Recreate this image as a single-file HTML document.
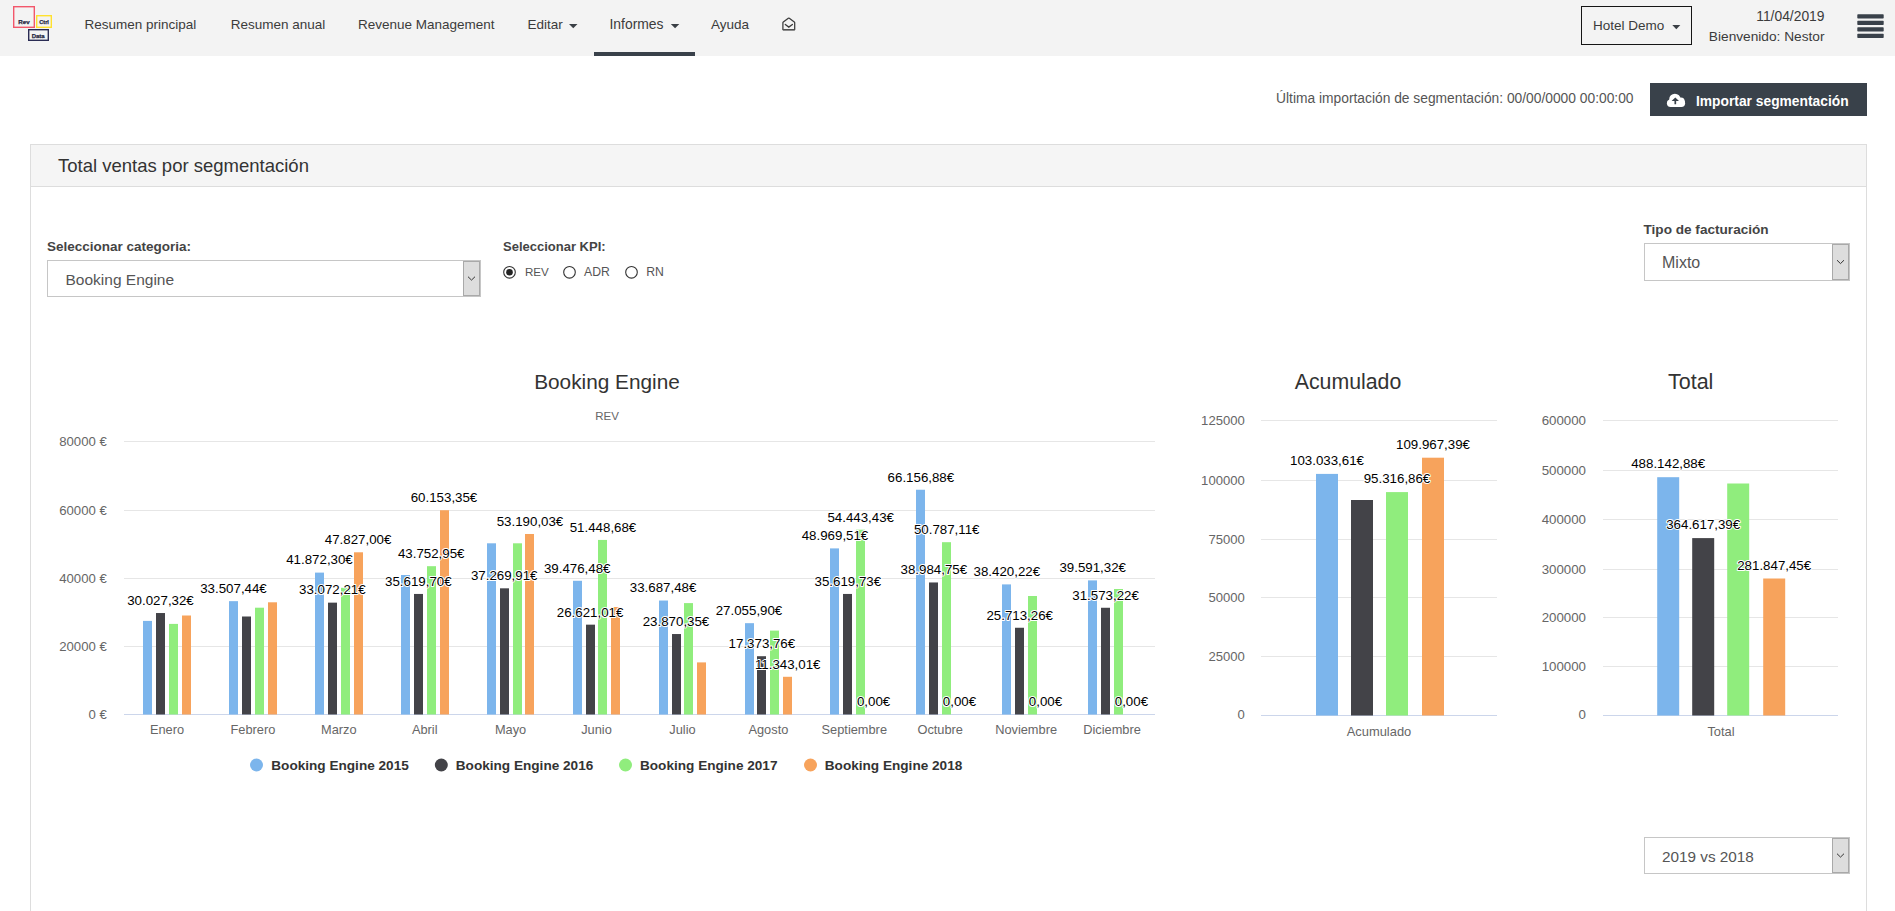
<!DOCTYPE html>
<html lang="es"><head><meta charset="utf-8"><title>Total ventas por segmentación</title>
<style>
html,body{margin:0;padding:0;background:#fff;overflow:hidden;}
body{width:1895px;height:911px;font-family:"Liberation Sans", sans-serif;}
svg{display:block;font-family:"Liberation Sans", sans-serif;}
</style></head><body>
<svg width="1895" height="911" viewBox="0 0 1895 911">
<rect x="0" y="0" width="1895" height="56" fill="#f3f3f3" stroke="none" stroke-width="1" />
<rect x="13.7" y="6.7" width="20.6" height="20.6" fill="none" stroke="#f2576b" stroke-width="1.4" />
<rect x="36.7" y="15.7" width="14.6" height="11.6" fill="none" stroke="#ffe12e" stroke-width="1.4" />
<rect x="28.7" y="29.7" width="19.6" height="10.6" fill="none" stroke="#2a2c54" stroke-width="1.4" />
<text x="23.9" y="24.2" font-size="6.2" fill="#23253f" font-weight="bold" text-anchor="middle" stroke="#23253f" stroke-width="0.25">Rev</text>
<text x="44.1" y="24.2" font-size="5.6" fill="#23253f" font-weight="bold" text-anchor="middle" stroke="#23253f" stroke-width="0.25">Ctrl</text>
<text x="38.2" y="37.8" font-size="6.0" fill="#23253f" font-weight="bold" text-anchor="middle" stroke="#23253f" stroke-width="0.25">Data</text>
<text x="84.5" y="29" font-size="13.5" fill="#3b3b3b" font-weight="normal" text-anchor="start" >Resumen principal</text>
<text x="230.8" y="29" font-size="13.5" fill="#3b3b3b" font-weight="normal" text-anchor="start" >Resumen anual</text>
<text x="358" y="29" font-size="13.5" fill="#3b3b3b" font-weight="normal" text-anchor="start" >Revenue Management</text>
<text x="527.5" y="29" font-size="13.5" fill="#3b3b3b" font-weight="normal" text-anchor="start" >Editar</text>
<path d="M569 24 L577.5 24 L573.25 28.3 Z" fill="#3a3f45"/>
<text x="609.5" y="29" font-size="13.9" fill="#3b3b3b" font-weight="normal" text-anchor="start" >Informes</text>
<path d="M670.8 24 L679.3 24 L675.05 28.3 Z" fill="#3a3f45"/>
<text x="711" y="29" font-size="13.5" fill="#3b3b3b" font-weight="normal" text-anchor="start" >Ayuda</text>
<path d="M782.9 29.6 L782.9 22.7 Q782.9 22.3 783.3 22 L788.3 18.3 Q788.8 17.95 789.3 18.3 L794.3 22 Q794.7 22.3 794.7 22.7 L794.7 29.6 Z" fill="none" stroke="#3b3b3b" stroke-width="1.25" stroke-linejoin="round"/>
<path d="M782.9 29.8 L794.7 29.8" stroke="#555" stroke-width="1.4"/>
<path d="M785.3 24.4 L788.8 27.1 L792.4 24.4" fill="none" stroke="#3b3b3b" stroke-width="1.25" stroke-linecap="round"/>
<rect x="594" y="52" width="101" height="4" fill="#39414a" stroke="none" stroke-width="1" />
<rect x="1581.5" y="6.5" width="110" height="38" fill="none" stroke="#151515" stroke-width="1" />
<text x="1593" y="30" font-size="13.5" fill="#3b3b3b" font-weight="normal" text-anchor="start" >Hotel Demo</text>
<path d="M1672.3 25 L1680.3 25 L1676.3 29.3 Z" fill="#3a3f45"/>
<text x="1824.5" y="21" font-size="13.85" fill="#3b3b3b" font-weight="normal" text-anchor="end" >11/04/2019</text>
<text x="1824.5" y="41" font-size="13.7" fill="#3b3b3b" font-weight="normal" text-anchor="end" >Bienvenido: Nestor</text>
<rect x="1857.3" y="14.2" width="26.4" height="4.2" fill="#39414a" stroke="none" stroke-width="1" rx="0.7"/>
<rect x="1857.3" y="20.8" width="26.4" height="4.2" fill="#39414a" stroke="none" stroke-width="1" rx="0.7"/>
<rect x="1857.3" y="27.3" width="26.4" height="4.2" fill="#39414a" stroke="none" stroke-width="1" rx="0.7"/>
<rect x="1857.3" y="33.8" width="26.4" height="4.2" fill="#39414a" stroke="none" stroke-width="1" rx="0.7"/>
<text x="1633.5" y="103.3" font-size="13.8" fill="#555" font-weight="normal" text-anchor="end" >Última importación de segmentación: 00/00/0000 00:00:00</text>
<rect x="1650" y="83" width="217" height="33" fill="#39414a" stroke="none" stroke-width="1" />
<g fill="#fff"><circle cx="1674.9" cy="99.4" r="5.7"/><circle cx="1680.9" cy="101.3" r="3.8"/><circle cx="1670.6" cy="103.3" r="3.7"/><circle cx="1681.4" cy="103.3" r="3.7"/><rect x="1670.6" y="99.6" width="10.8" height="7.4"/></g>
<path d="M1675.3 97.5 L1679 101.1 L1676.15 101.1 L1676.15 104.2 L1674.45 104.2 L1674.45 101.1 L1671.6 101.1 Z" fill="#39414a"/>
<text x="1696" y="105.5" font-size="13.8" fill="#fff" font-weight="bold" text-anchor="start" >Importar segmentación</text>
<rect x="30.5" y="144.5" width="1836" height="800" fill="#fff" stroke="#dddddd" stroke-width="1" />
<rect x="31" y="145" width="1835" height="41" fill="#f5f5f5" stroke="none" stroke-width="1" />
<line x1="31" y1="186.5" x2="1866" y2="186.5" stroke="#dddddd" stroke-width="1"/>
<text x="58" y="172.2" font-size="18.5" fill="#333" font-weight="normal" text-anchor="start" >Total ventas por segmentación</text>
<text x="47" y="251.2" font-size="13.5" fill="#444" font-weight="bold" text-anchor="start" >Seleccionar categoria:</text>
<rect x="47.5" y="260.5" width="433" height="36" fill="#fff" stroke="#c6c6c6" stroke-width="1" />
<rect x="463.5" y="261.5" width="16" height="34" fill="#dddddd" stroke="#a9a9a9" stroke-width="1" />
<path d="M468.0 276.7 L471.5 280.1 L475.0 276.7" fill="none" stroke="#333" stroke-width="1"/>
<text x="65.5" y="285.2" font-size="15.5" fill="#555" font-weight="normal" text-anchor="start" >Booking Engine</text>
<text x="503" y="251.2" font-size="13.0" fill="#444" font-weight="bold" text-anchor="start" >Seleccionar KPI:</text>
<circle cx="509.5" cy="272.3" r="5.8" fill="#fff" stroke="#333" stroke-width="1.1"/>
<circle cx="509.5" cy="272.3" r="3.3" fill="#222"/>
<text x="525" y="275.9" font-size="11.6" fill="#555" font-weight="normal" text-anchor="start" >REV</text>
<circle cx="569.5" cy="272.3" r="5.8" fill="#fff" stroke="#333" stroke-width="1.1"/>
<text x="584" y="275.9" font-size="12.2" fill="#555" font-weight="normal" text-anchor="start" >ADR</text>
<circle cx="631.5" cy="272.3" r="5.8" fill="#fff" stroke="#333" stroke-width="1.1"/>
<text x="646.3" y="275.9" font-size="12.2" fill="#555" font-weight="normal" text-anchor="start" >RN</text>
<text x="1643.5" y="234.3" font-size="13.6" fill="#444" font-weight="bold" text-anchor="start" >Tipo de facturación</text>
<rect x="1644.5" y="243.5" width="205" height="37" fill="#fff" stroke="#c6c6c6" stroke-width="1" />
<rect x="1832.5" y="244.5" width="16" height="35" fill="#dddddd" stroke="#a9a9a9" stroke-width="1" />
<path d="M1837.0 260.2 L1840.5 263.6 L1844.0 260.2" fill="none" stroke="#333" stroke-width="1"/>
<text x="1662" y="268" font-size="16.0" fill="#555" font-weight="normal" text-anchor="start" >Mixto</text>
<rect x="1644.5" y="837.5" width="205" height="36" fill="#fff" stroke="#c6c6c6" stroke-width="1" />
<rect x="1832.5" y="838.5" width="16" height="34" fill="#dddddd" stroke="#a9a9a9" stroke-width="1" />
<path d="M1837.0 853.7 L1840.5 857.1 L1844.0 853.7" fill="none" stroke="#333" stroke-width="1"/>
<text x="1662" y="862.2" font-size="15.3" fill="#555" font-weight="normal" text-anchor="start" >2019 vs 2018</text>
<text x="607" y="388.8" font-size="20.8" fill="#333" font-weight="normal" text-anchor="middle" >Booking Engine</text>
<text x="607" y="419.8" font-size="11.5" fill="#666" font-weight="normal" text-anchor="middle" >REV</text>
<line x1="124" y1="441.5" x2="1155" y2="441.5" stroke="#e6e6e6" stroke-width="1"/>
<text x="106.8" y="445.5" font-size="13.2" fill="#666" font-weight="normal" text-anchor="end" >80000 €</text>
<line x1="124" y1="510.5" x2="1155" y2="510.5" stroke="#e6e6e6" stroke-width="1"/>
<text x="106.8" y="514.5" font-size="13.2" fill="#666" font-weight="normal" text-anchor="end" >60000 €</text>
<line x1="124" y1="578.5" x2="1155" y2="578.5" stroke="#e6e6e6" stroke-width="1"/>
<text x="106.8" y="582.5" font-size="13.2" fill="#666" font-weight="normal" text-anchor="end" >40000 €</text>
<line x1="124" y1="646.5" x2="1155" y2="646.5" stroke="#e6e6e6" stroke-width="1"/>
<text x="106.8" y="650.5" font-size="13.2" fill="#666" font-weight="normal" text-anchor="end" >20000 €</text>
<text x="106.8" y="718.5" font-size="13.2" fill="#666" font-weight="normal" text-anchor="end" >0 €</text>
<line x1="124" y1="714.5" x2="1155" y2="714.5" stroke="#ccd6eb" stroke-width="1"/>
<text x="167.0" y="734.2" font-size="12.8" fill="#666" font-weight="normal" text-anchor="middle" >Enero</text>
<rect x="143" y="620.9" width="9" height="93.6" fill="#7cb5ec" stroke="none" stroke-width="1" />
<rect x="156" y="613.03" width="9" height="101.47" fill="#434348" stroke="none" stroke-width="1" />
<rect x="169" y="623.9" width="9" height="90.6" fill="#90ed7d" stroke="none" stroke-width="1" />
<rect x="182" y="615.5" width="9" height="99.0" fill="#f7a35c" stroke="none" stroke-width="1" />
<text x="252.9" y="734.2" font-size="12.8" fill="#666" font-weight="normal" text-anchor="middle" >Febrero</text>
<rect x="229" y="601.16" width="9" height="113.34" fill="#7cb5ec" stroke="none" stroke-width="1" />
<rect x="242" y="616.5" width="9" height="98.0" fill="#434348" stroke="none" stroke-width="1" />
<rect x="255" y="607.7" width="9" height="106.8" fill="#90ed7d" stroke="none" stroke-width="1" />
<rect x="268" y="602.3" width="9" height="112.2" fill="#f7a35c" stroke="none" stroke-width="1" />
<text x="338.8" y="734.2" font-size="12.8" fill="#666" font-weight="normal" text-anchor="middle" >Marzo</text>
<rect x="315" y="572.61" width="9" height="141.89" fill="#7cb5ec" stroke="none" stroke-width="1" />
<rect x="328" y="602.64" width="9" height="111.86" fill="#434348" stroke="none" stroke-width="1" />
<rect x="341" y="587.8" width="9" height="126.7" fill="#90ed7d" stroke="none" stroke-width="1" />
<rect x="354" y="552.29" width="9" height="162.21" fill="#f7a35c" stroke="none" stroke-width="1" />
<text x="424.7" y="734.2" font-size="12.8" fill="#666" font-weight="normal" text-anchor="middle" >Abril</text>
<rect x="401" y="575.0" width="9" height="139.5" fill="#7cb5ec" stroke="none" stroke-width="1" />
<rect x="414" y="593.95" width="9" height="120.55" fill="#434348" stroke="none" stroke-width="1" />
<rect x="427" y="566.19" width="9" height="148.31" fill="#90ed7d" stroke="none" stroke-width="1" />
<rect x="440" y="510.23" width="9" height="204.27" fill="#f7a35c" stroke="none" stroke-width="1" />
<text x="510.6" y="734.2" font-size="12.8" fill="#666" font-weight="normal" text-anchor="middle" >Mayo</text>
<rect x="487" y="543.3" width="9" height="171.2" fill="#7cb5ec" stroke="none" stroke-width="1" />
<rect x="500" y="588.32" width="9" height="126.18" fill="#434348" stroke="none" stroke-width="1" />
<rect x="513" y="543.3" width="9" height="171.2" fill="#90ed7d" stroke="none" stroke-width="1" />
<rect x="525" y="533.99" width="9" height="180.51" fill="#f7a35c" stroke="none" stroke-width="1" />
<text x="596.5" y="734.2" font-size="12.8" fill="#666" font-weight="normal" text-anchor="middle" >Junio</text>
<rect x="573" y="580.79" width="9" height="133.71" fill="#7cb5ec" stroke="none" stroke-width="1" />
<rect x="586" y="624.66" width="9" height="89.84" fill="#434348" stroke="none" stroke-width="1" />
<rect x="598" y="539.93" width="9" height="174.57" fill="#90ed7d" stroke="none" stroke-width="1" />
<rect x="611" y="607.0" width="9" height="107.5" fill="#f7a35c" stroke="none" stroke-width="1" />
<text x="682.5" y="734.2" font-size="12.8" fill="#666" font-weight="normal" text-anchor="middle" >Julio</text>
<rect x="659" y="600.54" width="9" height="113.96" fill="#7cb5ec" stroke="none" stroke-width="1" />
<rect x="672" y="634.04" width="9" height="80.46" fill="#434348" stroke="none" stroke-width="1" />
<rect x="684" y="603.1" width="9" height="111.4" fill="#90ed7d" stroke="none" stroke-width="1" />
<rect x="697" y="662.4" width="9" height="52.1" fill="#f7a35c" stroke="none" stroke-width="1" />
<text x="768.4" y="734.2" font-size="12.8" fill="#666" font-weight="normal" text-anchor="middle" >Agosto</text>
<rect x="745" y="623.17" width="9" height="91.33" fill="#7cb5ec" stroke="none" stroke-width="1" />
<rect x="757" y="656.21" width="9" height="58.29" fill="#434348" stroke="none" stroke-width="1" />
<rect x="770" y="630.6" width="9" height="83.9" fill="#90ed7d" stroke="none" stroke-width="1" />
<rect x="783" y="676.79" width="9" height="37.71" fill="#f7a35c" stroke="none" stroke-width="1" />
<text x="854.3" y="734.2" font-size="12.8" fill="#666" font-weight="normal" text-anchor="middle" >Septiembre</text>
<rect x="830" y="548.39" width="9" height="166.11" fill="#7cb5ec" stroke="none" stroke-width="1" />
<rect x="843" y="593.95" width="9" height="120.55" fill="#434348" stroke="none" stroke-width="1" />
<rect x="856" y="529.71" width="9" height="184.79" fill="#90ed7d" stroke="none" stroke-width="1" />
<text x="940.2" y="734.2" font-size="12.8" fill="#666" font-weight="normal" text-anchor="middle" >Octubre</text>
<rect x="916" y="489.74" width="9" height="224.76" fill="#7cb5ec" stroke="none" stroke-width="1" />
<rect x="929" y="582.46" width="9" height="132.04" fill="#434348" stroke="none" stroke-width="1" />
<rect x="942" y="542.19" width="9" height="172.31" fill="#90ed7d" stroke="none" stroke-width="1" />
<text x="1026.1" y="734.2" font-size="12.8" fill="#666" font-weight="normal" text-anchor="middle" >Noviembre</text>
<rect x="1002" y="584.39" width="9" height="130.11" fill="#7cb5ec" stroke="none" stroke-width="1" />
<rect x="1015" y="627.75" width="9" height="86.75" fill="#434348" stroke="none" stroke-width="1" />
<rect x="1028" y="596.0" width="9" height="118.5" fill="#90ed7d" stroke="none" stroke-width="1" />
<text x="1112.0" y="734.2" font-size="12.8" fill="#666" font-weight="normal" text-anchor="middle" >Diciembre</text>
<rect x="1088" y="580.39" width="9" height="134.11" fill="#7cb5ec" stroke="none" stroke-width="1" />
<rect x="1101" y="607.76" width="9" height="106.74" fill="#434348" stroke="none" stroke-width="1" />
<rect x="1114" y="589.0" width="9" height="125.5" fill="#90ed7d" stroke="none" stroke-width="1" />
<text x="160.5" y="604.8" font-size="13.3" fill="#000" font-weight="normal" text-anchor="middle" stroke="#fff" stroke-width="2" paint-order="stroke" stroke-linejoin="round">30.027,32€</text>
<text x="233.5" y="593.0" font-size="13.3" fill="#000" font-weight="normal" text-anchor="middle" stroke="#fff" stroke-width="2" paint-order="stroke" stroke-linejoin="round">33.507,44€</text>
<text x="319.5" y="564.4" font-size="13.3" fill="#000" font-weight="normal" text-anchor="middle" stroke="#fff" stroke-width="2" paint-order="stroke" stroke-linejoin="round">41.872,30€</text>
<text x="332.3" y="594.4" font-size="13.3" fill="#000" font-weight="normal" text-anchor="middle" stroke="#fff" stroke-width="2" paint-order="stroke" stroke-linejoin="round">33.072,21€</text>
<text x="358.1" y="544.1" font-size="13.3" fill="#000" font-weight="normal" text-anchor="middle" stroke="#fff" stroke-width="2" paint-order="stroke" stroke-linejoin="round">47.827,00€</text>
<text x="418.3" y="585.7" font-size="13.3" fill="#000" font-weight="normal" text-anchor="middle" stroke="#fff" stroke-width="2" paint-order="stroke" stroke-linejoin="round">35.619,70€</text>
<text x="431.2" y="558.0" font-size="13.3" fill="#000" font-weight="normal" text-anchor="middle" stroke="#fff" stroke-width="2" paint-order="stroke" stroke-linejoin="round">43.752,95€</text>
<text x="444.0" y="502.0" font-size="13.3" fill="#000" font-weight="normal" text-anchor="middle" stroke="#fff" stroke-width="2" paint-order="stroke" stroke-linejoin="round">60.153,35€</text>
<text x="504.2" y="580.1" font-size="13.3" fill="#000" font-weight="normal" text-anchor="middle" stroke="#fff" stroke-width="2" paint-order="stroke" stroke-linejoin="round">37.269,91€</text>
<text x="530.0" y="525.8" font-size="13.3" fill="#000" font-weight="normal" text-anchor="middle" stroke="#fff" stroke-width="2" paint-order="stroke" stroke-linejoin="round">53.190,03€</text>
<text x="577.2" y="572.6" font-size="13.3" fill="#000" font-weight="normal" text-anchor="middle" stroke="#fff" stroke-width="2" paint-order="stroke" stroke-linejoin="round">39.476,48€</text>
<text x="590.1" y="616.5" font-size="13.3" fill="#000" font-weight="normal" text-anchor="middle" stroke="#fff" stroke-width="2" paint-order="stroke" stroke-linejoin="round">26.621,01€</text>
<text x="603.0" y="531.7" font-size="13.3" fill="#000" font-weight="normal" text-anchor="middle" stroke="#fff" stroke-width="2" paint-order="stroke" stroke-linejoin="round">51.448,68€</text>
<text x="663.1" y="592.3" font-size="13.3" fill="#000" font-weight="normal" text-anchor="middle" stroke="#fff" stroke-width="2" paint-order="stroke" stroke-linejoin="round">33.687,48€</text>
<text x="676.0" y="625.8" font-size="13.3" fill="#000" font-weight="normal" text-anchor="middle" stroke="#fff" stroke-width="2" paint-order="stroke" stroke-linejoin="round">23.870,35€</text>
<text x="749.0" y="615.0" font-size="13.3" fill="#000" font-weight="normal" text-anchor="middle" stroke="#fff" stroke-width="2" paint-order="stroke" stroke-linejoin="round">27.055,90€</text>
<text x="761.9" y="648.0" font-size="13.3" fill="#000" font-weight="normal" text-anchor="middle" stroke="#fff" stroke-width="2" paint-order="stroke" stroke-linejoin="round">17.373,76€</text>
<text x="787.7" y="668.6" font-size="13.3" fill="#000" font-weight="normal" text-anchor="middle" stroke="#fff" stroke-width="2" paint-order="stroke" stroke-linejoin="round">11.343,01€</text>
<text x="835.0" y="540.2" font-size="13.3" fill="#000" font-weight="normal" text-anchor="middle" stroke="#fff" stroke-width="2" paint-order="stroke" stroke-linejoin="round">48.969,51€</text>
<text x="847.8" y="585.7" font-size="13.3" fill="#000" font-weight="normal" text-anchor="middle" stroke="#fff" stroke-width="2" paint-order="stroke" stroke-linejoin="round">35.619,73€</text>
<text x="860.7" y="521.5" font-size="13.3" fill="#000" font-weight="normal" text-anchor="middle" stroke="#fff" stroke-width="2" paint-order="stroke" stroke-linejoin="round">54.443,43€</text>
<text x="873.6" y="706.3" font-size="13.3" fill="#000" font-weight="normal" text-anchor="middle" stroke="#fff" stroke-width="2" paint-order="stroke" stroke-linejoin="round">0,00€</text>
<text x="920.9" y="481.5" font-size="13.3" fill="#000" font-weight="normal" text-anchor="middle" stroke="#fff" stroke-width="2" paint-order="stroke" stroke-linejoin="round">66.156,88€</text>
<text x="933.8" y="574.3" font-size="13.3" fill="#000" font-weight="normal" text-anchor="middle" stroke="#fff" stroke-width="2" paint-order="stroke" stroke-linejoin="round">38.984,75€</text>
<text x="946.7" y="534.0" font-size="13.3" fill="#000" font-weight="normal" text-anchor="middle" stroke="#fff" stroke-width="2" paint-order="stroke" stroke-linejoin="round">50.787,11€</text>
<text x="959.5" y="706.3" font-size="13.3" fill="#000" font-weight="normal" text-anchor="middle" stroke="#fff" stroke-width="2" paint-order="stroke" stroke-linejoin="round">0,00€</text>
<text x="1006.8" y="576.2" font-size="13.3" fill="#000" font-weight="normal" text-anchor="middle" stroke="#fff" stroke-width="2" paint-order="stroke" stroke-linejoin="round">38.420,22€</text>
<text x="1019.7" y="619.6" font-size="13.3" fill="#000" font-weight="normal" text-anchor="middle" stroke="#fff" stroke-width="2" paint-order="stroke" stroke-linejoin="round">25.713,26€</text>
<text x="1045.5" y="706.3" font-size="13.3" fill="#000" font-weight="normal" text-anchor="middle" stroke="#fff" stroke-width="2" paint-order="stroke" stroke-linejoin="round">0,00€</text>
<text x="1092.7" y="572.2" font-size="13.3" fill="#000" font-weight="normal" text-anchor="middle" stroke="#fff" stroke-width="2" paint-order="stroke" stroke-linejoin="round">39.591,32€</text>
<text x="1105.6" y="599.6" font-size="13.3" fill="#000" font-weight="normal" text-anchor="middle" stroke="#fff" stroke-width="2" paint-order="stroke" stroke-linejoin="round">31.573,22€</text>
<text x="1131.4" y="706.3" font-size="13.3" fill="#000" font-weight="normal" text-anchor="middle" stroke="#fff" stroke-width="2" paint-order="stroke" stroke-linejoin="round">0,00€</text>
<circle cx="256.5" cy="765" r="6.5" fill="#7cb5ec"/>
<text x="271.3" y="769.9" font-size="13.6" fill="#333" font-weight="bold" text-anchor="start" >Booking Engine 2015</text>
<circle cx="441.3" cy="765" r="6.5" fill="#434348"/>
<text x="455.8" y="769.9" font-size="13.6" fill="#333" font-weight="bold" text-anchor="start" >Booking Engine 2016</text>
<circle cx="625.5" cy="765" r="6.5" fill="#90ed7d"/>
<text x="640" y="769.9" font-size="13.6" fill="#333" font-weight="bold" text-anchor="start" >Booking Engine 2017</text>
<circle cx="810.5" cy="765" r="6.5" fill="#f7a35c"/>
<text x="824.8" y="769.9" font-size="13.6" fill="#333" font-weight="bold" text-anchor="start" >Booking Engine 2018</text>
<text x="1348" y="389" font-size="21.3" fill="#333" font-weight="normal" text-anchor="middle" >Acumulado</text>
<line x1="1261" y1="420.5" x2="1497" y2="420.5" stroke="#e6e6e6" stroke-width="1"/>
<text x="1244.8" y="424.5" font-size="13.1" fill="#666" font-weight="normal" text-anchor="end" >125000</text>
<line x1="1261" y1="480.5" x2="1497" y2="480.5" stroke="#e6e6e6" stroke-width="1"/>
<text x="1244.8" y="484.5" font-size="13.1" fill="#666" font-weight="normal" text-anchor="end" >100000</text>
<line x1="1261" y1="539.5" x2="1497" y2="539.5" stroke="#e6e6e6" stroke-width="1"/>
<text x="1244.8" y="543.5" font-size="13.1" fill="#666" font-weight="normal" text-anchor="end" >75000</text>
<line x1="1261" y1="597.5" x2="1497" y2="597.5" stroke="#e6e6e6" stroke-width="1"/>
<text x="1244.8" y="601.5" font-size="13.1" fill="#666" font-weight="normal" text-anchor="end" >50000</text>
<line x1="1261" y1="656.5" x2="1497" y2="656.5" stroke="#e6e6e6" stroke-width="1"/>
<text x="1244.8" y="660.5" font-size="13.1" fill="#666" font-weight="normal" text-anchor="end" >25000</text>
<text x="1244.8" y="719.2" font-size="13.1" fill="#666" font-weight="normal" text-anchor="end" >0</text>
<line x1="1261" y1="715.5" x2="1497" y2="715.5" stroke="#ccd6eb" stroke-width="1"/>
<rect x="1316" y="473.9" width="22" height="241.6" fill="#7cb5ec" stroke="none" stroke-width="1" />
<rect x="1351" y="500.0" width="22" height="215.5" fill="#434348" stroke="none" stroke-width="1" />
<rect x="1386" y="492.1" width="22" height="223.4" fill="#90ed7d" stroke="none" stroke-width="1" />
<rect x="1422" y="457.7" width="22" height="257.8" fill="#f7a35c" stroke="none" stroke-width="1" />
<text x="1379" y="736.2" font-size="12.9" fill="#666" font-weight="normal" text-anchor="middle" >Acumulado</text>
<text x="1327" y="464.8" font-size="13.3" fill="#000" font-weight="normal" text-anchor="middle" stroke="#fff" stroke-width="2" paint-order="stroke" stroke-linejoin="round">103.033,61€</text>
<text x="1397" y="483.0" font-size="13.3" fill="#000" font-weight="normal" text-anchor="middle" stroke="#fff" stroke-width="2" paint-order="stroke" stroke-linejoin="round">95.316,86€</text>
<text x="1433" y="448.6" font-size="13.3" fill="#000" font-weight="normal" text-anchor="middle" stroke="#fff" stroke-width="2" paint-order="stroke" stroke-linejoin="round">109.967,39€</text>
<text x="1690.7" y="389" font-size="21.5" fill="#333" font-weight="normal" text-anchor="middle" >Total</text>
<line x1="1603" y1="420.5" x2="1838" y2="420.5" stroke="#e6e6e6" stroke-width="1"/>
<text x="1586" y="424.5" font-size="13.3" fill="#666" font-weight="normal" text-anchor="end" >600000</text>
<line x1="1603" y1="470.5" x2="1838" y2="470.5" stroke="#e6e6e6" stroke-width="1"/>
<text x="1586" y="474.5" font-size="13.3" fill="#666" font-weight="normal" text-anchor="end" >500000</text>
<line x1="1603" y1="519.5" x2="1838" y2="519.5" stroke="#e6e6e6" stroke-width="1"/>
<text x="1586" y="523.5" font-size="13.3" fill="#666" font-weight="normal" text-anchor="end" >400000</text>
<line x1="1603" y1="569.5" x2="1838" y2="569.5" stroke="#e6e6e6" stroke-width="1"/>
<text x="1586" y="573.5" font-size="13.3" fill="#666" font-weight="normal" text-anchor="end" >300000</text>
<line x1="1603" y1="617.5" x2="1838" y2="617.5" stroke="#e6e6e6" stroke-width="1"/>
<text x="1586" y="621.5" font-size="13.3" fill="#666" font-weight="normal" text-anchor="end" >200000</text>
<line x1="1603" y1="666.5" x2="1838" y2="666.5" stroke="#e6e6e6" stroke-width="1"/>
<text x="1586" y="670.5" font-size="13.3" fill="#666" font-weight="normal" text-anchor="end" >100000</text>
<text x="1586" y="719.2" font-size="13.3" fill="#666" font-weight="normal" text-anchor="end" >0</text>
<line x1="1603" y1="715.5" x2="1838" y2="715.5" stroke="#ccd6eb" stroke-width="1"/>
<rect x="1657.2" y="477.2" width="22" height="238.3" fill="#7cb5ec" stroke="none" stroke-width="1" />
<rect x="1692.2" y="538.1" width="22" height="177.4" fill="#434348" stroke="none" stroke-width="1" />
<rect x="1727.2" y="483.5" width="22" height="232.0" fill="#90ed7d" stroke="none" stroke-width="1" />
<rect x="1763.2" y="578.5" width="22" height="137.0" fill="#f7a35c" stroke="none" stroke-width="1" />
<text x="1721" y="736.2" font-size="12.9" fill="#666" font-weight="normal" text-anchor="middle" >Total</text>
<text x="1668.2" y="468.2" font-size="13.3" fill="#000" font-weight="normal" text-anchor="middle" stroke="#fff" stroke-width="2" paint-order="stroke" stroke-linejoin="round">488.142,88€</text>
<text x="1703.2" y="529.1" font-size="13.3" fill="#000" font-weight="normal" text-anchor="middle" stroke="#fff" stroke-width="2" paint-order="stroke" stroke-linejoin="round">364.617,39€</text>
<text x="1774.2" y="569.5" font-size="13.3" fill="#000" font-weight="normal" text-anchor="middle" stroke="#fff" stroke-width="2" paint-order="stroke" stroke-linejoin="round">281.847,45€</text>
</svg>
</body></html>
